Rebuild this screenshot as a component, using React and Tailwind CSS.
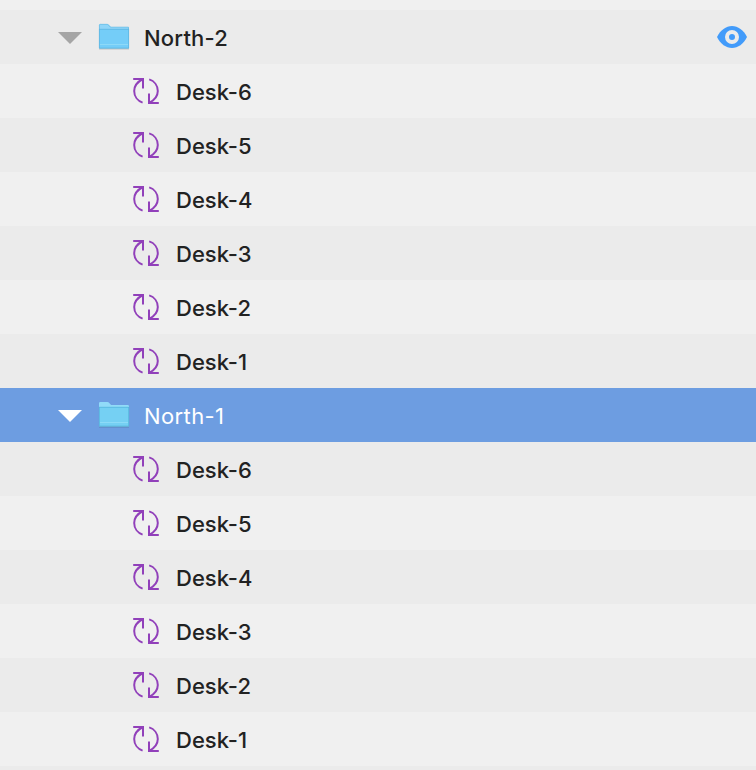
const desks = ["Desk-6", "Desk-5", "Desk-4", "Desk-3", "Desk-2", "Desk-1"];

function SyncIcon() {
  return (
    <svg className="h-7 w-7 shrink-0" viewBox="0 0 28 28" fill="none" stroke="#9140ba" strokeWidth="2">
      <path d="M1.2 2H11V11.6M11 2C5.5 4.8 2.200 9 2.200 14C2.200 19.500 5.800 24 10.600 25.600" />
      <path d="M17.200 2.400C22.200 4 25.800 8.500 25.800 14C25.800 19 22.500 23.200 17 26M17 16.400V26H26.800" />
    </svg>
  );
}

function FolderIcon({ selected }) {
  const edge = selected ? "#55b5dc" : "#5eb5df";
  return (
    <svg className="h-7 w-8 shrink-0" viewBox="0 0 32 28">
      <path d="M1 25H31V26.4H1Z" fill="#000000" opacity="0.22" />
      <path d="M1 25.6V2.3Q1 1 2.3 1H9.5Q10.3 1 10.8 1.6L12.6 3.5Q13 4 13.8 4H29.7Q31 4 31 5.3V25.6Z" fill={selected ? "#91dbf8" : "#8fd5f8"} />
      <path d="M1 6H31V25H1Z" fill={selected ? "#75d0f3" : "#74cdf8"} />
      <path d="M1 6.3H31M1.4 6V25.1H30.6V6" fill="none" stroke={edge} strokeWidth="0.8" />
      <path d="M2 21.5H30" stroke="#93dcf8" strokeWidth="0.8" />
      {!selected && <path d="M1.4 6V2.3Q1.4 1.3 2.3 1.3H9.5L12.3 4.1H30.5V6" fill="none" stroke={edge} strokeWidth="0.6" />}
    </svg>
  );
}

function EyeIcon() {
  return (
    <svg className="h-6 w-8" viewBox="0 0 32 24">
      <path d="M1 12C4.500 5 10 1 16 1S27.500 5 31 12C27.500 19 22 23 16 23S4.500 19 1 12Z" fill="#429bfa" />
      <circle cx="16" cy="12" r="5" fill="none" stroke="#ebebeb" strokeWidth="4" />
    </svg>
  );
}

function GroupRow({ name, selected, visible }) {
  return (
    <div className={`flex h-[54px] items-center pl-[58px] pr-2 ${selected ? "bg-[#6d9de1] text-white" : "bg-[#ebebeb] font-medium"}`}>
      <svg className={`mt-0.5 h-3 w-6 shrink-0 ${selected ? "text-white" : "text-[#a5a5a5]"}`} viewBox="0 0 24 12">
        <path d="M0 0H24L12 12Z" fill="currentColor" />
      </svg>
      <div className="ml-4 flex"><FolderIcon selected={selected} /></div>
      <span className={`ml-3.5 flex-1 pt-0.5 ${selected ? "tracking-[0.4px]" : "tracking-[0.2px]"}`}>{name}</span>
      {visible && <EyeIcon />}
    </div>
  );
}

function DeskRow({ name, shaded }) {
  return (
    <div className={`flex h-[54px] items-center pl-[132px] font-medium ${shaded ? "bg-[#ebebeb]" : "bg-[#f0f0f0]"}`}>
      <SyncIcon />
      <span className="ml-4 pt-0.5">{name}</span>
    </div>
  );
}

export default function App() {
  return (
    <div className="flex h-[770px] w-[756px] flex-col overflow-hidden bg-[#ebebeb] font-['Inter',sans-serif] text-[22px] leading-7 text-[#222222]">
      <div className="h-2.5 bg-[#f0f0f0]" />
      <GroupRow name="North-2" visible />
      {desks.map((name, i) => <DeskRow key={name} name={name} shaded={i % 2 === 1} />)}
      <GroupRow name="North-1" selected />
      {desks.map((name, i) => <DeskRow key={name} name={name} shaded={i % 2 === 0} />)}
    </div>
  );
}
